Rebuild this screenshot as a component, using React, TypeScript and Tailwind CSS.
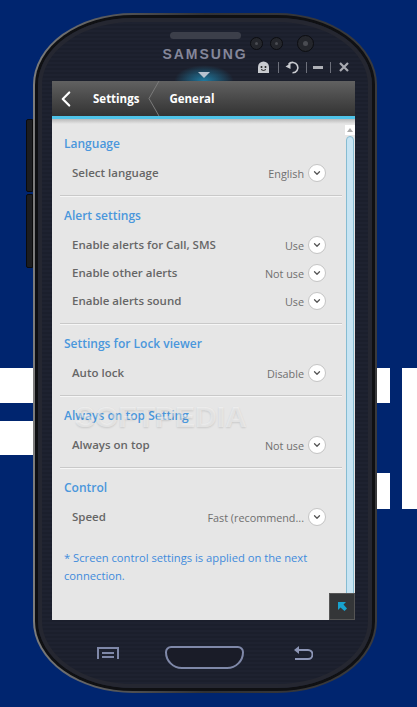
import { ChevronDown, ChevronLeft } from "lucide-react";

const font = "font-['Open_Sans','Noto_Sans',sans-serif]";

const sections = [
  { title: "Language", rows: [{ label: "Select language", value: "English" }] },
  {
    title: "Alert settings",
    rows: [
      { label: "Enable alerts for Call, SMS", value: "Use" },
      { label: "Enable other alerts", value: "Not use" },
      { label: "Enable alerts sound", value: "Use" },
    ],
  },
  { title: "Settings for Lock viewer", rows: [{ label: "Auto lock", value: "Disable" }] },
  { title: "Always on top Setting", rows: [{ label: "Always on top", value: "Not use" }] },
  { title: "Control", rows: [{ label: "Speed", value: "Fast (recommend..." }] },
];

const Camera = ({ big }: { big?: boolean }) => (
  <div
    className={`flex items-center justify-center rounded-full border border-[#0c0d11] bg-[#24262c] ${
      big ? "h-[17px] w-[17px]" : "h-[13px] w-[13px]"
    }`}
  >
    <div className={`rounded-full bg-[#4a4c52] ${big ? "h-[5px] w-[5px]" : "h-[3px] w-[3px]"}`} />
  </div>
);

const Sep = () => <div className="h-[11px] w-px bg-[#6d707b]" />;

const App = () => {
  return (
    <div className={`relative h-[707px] w-[417px] overflow-hidden bg-[#00256f] pl-[26px] pt-[13px] ${font}`}>
      {/* background logo behind the phone */}
      <svg className="absolute left-0 top-0" width="417" height="707" fill="#ffffff">
        <rect x="0" y="368" width="40" height="35" />
        <rect x="0" y="421" width="40" height="34" />
        <rect x="370" y="368" width="20" height="35" />
        <rect x="370" y="473" width="20" height="36" />
        <rect x="402" y="368" width="15" height="141" />
      </svg>

      <div className="relative flex">
        {/* side keys */}
        <div className="flex flex-col gap-[2px] pt-[106px]">
          <div className="h-[73px] w-[7px] rounded-l-[2px] border border-[#0b0b0c] bg-[#1c1d20]" />
          <div className="h-[74px] w-[7px] rounded-l-[2px] border border-[#0b0b0c] bg-[#1c1d20]" />
        </div>

        {/* phone body */}
        <div className="h-[680px] w-[344px] rounded-[100px/72px] bg-gradient-to-r from-[#7c7c7c] via-[#303134] to-[#3a3a3c] p-[2px]">
          <div className="h-full w-full rounded-[98px/70px] bg-[#0f1013] p-[3px]">
            <div className="flex h-full w-full flex-col rounded-[95px/67px] bg-[repeating-linear-gradient(180deg,#1e2230_0px,#1e2230_2px,#1b1f2c_2px,#1b1f2c_4px)] shadow-[inset_0_0_0_4px_#252731]">
              {/* top bezel */}
              <div className="flex h-[63px] shrink-0">
                <div className="ml-[126px] flex w-[82px] flex-col items-center pt-[14px]">
                  <div className="h-[7px] w-[71px] rounded-full bg-[#3c3f4a]" />
                  <div className="mt-[7px] font-['Liberation_Sans',sans-serif] text-[14px] font-bold leading-[16px] tracking-[1.9px] whitespace-nowrap text-[#85879a]">
                    SAMSUNG
                  </div>
                  <div className="relative mr-[3px] mt-[3px] flex w-[60px] justify-center">
                    <div className="h-[16px] w-[60px] bg-[radial-gradient(ellipse_at_bottom,#1f7aa0,transparent_70%)]" />
                    <div className="absolute top-[7px] h-0 w-0 border-x-[6px] border-t-[6px] border-x-transparent border-t-[#b8c3d0]" />
                  </div>
                </div>
                <div className="ml-[3px] flex w-[100px] flex-col pt-[17px]">
                  <div className="flex items-center pl-[1px]">
                    <Camera />
                    <div className="w-[7px]" />
                    <Camera />
                    <div className="w-[14px]" />
                    <Camera big />
                  </div>
                  <div className="mt-[8px] flex items-center gap-[6px] pl-[8px]">
                    <svg width="13" height="13" viewBox="0 0 13 13" className="mr-[2px]">
                      <path d="M1 12V6a5.5 5.5 0 0 1 11 0v6z" fill="#c9cbd0" />
                      <circle cx="4.5" cy="6" r="1" fill="#222" />
                      <circle cx="8.5" cy="6" r="1" fill="#222" />
                      <path d="M4 8.5q2.5 2 5 0" stroke="#222" fill="none" />
                    </svg>
                    <Sep />
                    <svg width="15" height="14" viewBox="0 0 15 14" fill="none">
                      <path d="M3.5 4.5A5.2 5.2 0 1 1 7.5 12.8" stroke="#c9cbd0" strokeWidth="1.6" />
                      <path d="M0.5 6.5L5.5 3.5V9z" fill="#c9cbd0" />
                    </svg>
                    <Sep />
                    <div className="mr-[1px] h-[3px] w-[10px] bg-[#aeb0b6]" />
                    <Sep />
                    <svg width="10" height="10" viewBox="0 0 10 10" className="ml-[2px]">
                      <path d="M1 1l8 8M9 1l-8 8" stroke="#a9abb2" strokeWidth="2.2" />
                    </svg>
                  </div>
                </div>
              </div>

              {/* screen */}
              <div className="relative ml-[14px] mr-[17px] flex h-[539px] shrink-0 flex-col bg-[#e6e6e6]">
                <div className="flex h-[35px] shrink-0 items-center bg-gradient-to-b from-[#616161] to-[#333333] text-white">
                  <ChevronLeft size={26} strokeWidth={2} className="ml-px mr-[14px]" />
                  <span className="text-[11.5px] font-bold">Settings</span>
                  <svg width="12" height="35" viewBox="0 0 12 35" className="ml-[9px] mr-[9px]" fill="none">
                    <path d="M11 0L1 17.5L11 35" stroke="#7b7b7b" />
                  </svg>
                  <span className="text-[11.5px] font-bold">General</span>
                </div>
                <div className="h-[3px] shrink-0 bg-[#4fc3e8]" />
                <div className="h-[5px] shrink-0 bg-gradient-to-b from-[#b9b9b9] to-[#e6e6e6]" />

                <div className="flex min-h-0 flex-1">
                  <div className="min-w-0 flex-1 pl-[8px] pr-[3px]">
                    {sections.map((section, i) => (
                      <div key={section.title} className={i < 4 ? "border-b border-[#c9c9c9] shadow-[0_1px_0_#f6f6f6]" : ""}>
                        <div className="mt-[10px] h-5 pl-1 text-[12px] font-semibold leading-5 text-[#4a97dc]">
                          {section.title}
                        </div>
                        <div className="mt-[5px] pb-[8px]">
                          {section.rows.map((row) => (
                            <div key={row.label} className="flex h-7 items-center pl-3 pr-[16px]">
                              <span className="flex-1 whitespace-nowrap text-[11.5px] font-semibold text-[#666666]">{row.label}</span>
                              <span className="mr-[4px] mt-[2px] whitespace-nowrap text-[10.8px] text-[#6f6f6f]">{row.value}</span>
                              <span className="flex h-[18px] w-[18px] items-center justify-center rounded-full border border-[#c4c4c4] bg-white">
                                <ChevronDown size={10} strokeWidth={3} className="text-[#555555]" />
                              </span>
                            </div>
                          ))}
                        </div>
                      </div>
                    ))}
                    <p className="mt-[10px] pl-1 pr-3 text-[11.2px] leading-[18px] text-[#3f8bdc]">
                      * Screen control settings is applied on the next connection.
                    </p>
                  </div>

                  {/* scrollbar */}
                  <div className="flex w-[10px] shrink-0 flex-col pt-[1px]">
                    <div className="flex h-[10px] shrink-0 items-center justify-center bg-white">
                      <div className="h-0 w-0 border-x-[3px] border-b-[4px] border-x-transparent border-b-[#aaaaaa]" />
                    </div>
                    <div className="ml-px mr-px mt-[1px] flex-1 rounded-t-[4px] border border-[#86bcd2] bg-[#c7e4f3]" />
                  </div>
                </div>

                {/* corner button */}
                <div className="absolute bottom-0 right-0 flex h-[27px] w-[26px] items-center justify-center border border-[#555555] bg-[#343638]">
                  <svg width="11" height="11" viewBox="0 0 11 11">
                    <path d="M1 1h8L6.5 3.5 10 7.5 7.5 10 3.5 6.5 1 9z" fill="#18a3cf" />
                  </svg>
                </div>
              </div>

              {/* bottom keys */}
              <div className="flex flex-1 items-start pl-[59px] pt-[26px]">
                <svg width="22" height="12" viewBox="0 0 22 12" className="mt-[1px]" fill="none">
                  <path d="M0 0h22v12h-2V2H2v10H0z" fill="#7f88a8" />
                  <path d="M5 5h12v2H5zM5 9h12v2H5z" fill="#7f88a8" />
                </svg>
                <div className="ml-[46px] h-[23px] w-[79px] rounded-t-[8px] rounded-b-[22px] border-2 border-[#7f88a8] bg-[#1a1c28]" />
                <svg width="19" height="15" viewBox="0 0 19 15" className="ml-[50px]" fill="none">
                  <path d="M4 4h10a4 4 0 0 1 0 9H1" stroke="#8d96b6" strokeWidth="2" />
                  <path d="M0 4l5-4v8z" fill="#8d96b6" />
                </svg>
              </div>
            </div>
          </div>
        </div>

        {/* watermark */}
        <div className="absolute left-[49px] top-[387px] font-['Liberation_Sans',sans-serif] text-[30px] font-bold leading-[34px] text-white/45 [text-shadow:0_1px_2px_rgba(0,0,0,0.12)]">
          SOFTPEDIA
        </div>
      </div>
    </div>
  );
};

export default App;
